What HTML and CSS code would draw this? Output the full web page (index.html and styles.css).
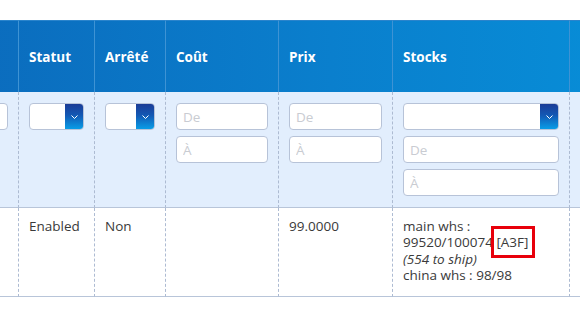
FILE: index.html
```html
<!DOCTYPE html>
<html lang="fr">
<head>
<meta charset="utf-8">
<title>Grille produits</title>
<link rel="stylesheet" href="styles.css">
</head>
<body>
<div class="page">
  <table class="grid">
    <colgroup>
      <col class="w-prev">
      <col class="w-statut">
      <col class="w-arrete">
      <col class="w-cout">
      <col class="w-prix">
      <col class="w-stocks">
      <col class="w-next">
    </colgroup>
    <thead>
      <tr class="head">
        <th class="first"></th>
        <th>Statut</th>
        <th>Arrêté</th>
        <th>Coût</th>
        <th>Prix</th>
        <th>Stocks</th>
        <th></th>
      </tr>
      <tr class="filters">
        <td class="first"><div class="field"><input class="input" type="text"></div></td>
        <td><div class="field"><div class="select"><span class="sel-value"></span><span class="sel-arrow"><svg width="7" height="4" viewBox="0 0 7 4"><path d="M0.5 0.5 L3.5 3.5 L6.5 0.5" fill="none" stroke="#fff" stroke-width="1"/></svg></span></div></div></td>
        <td><div class="field"><div class="select"><span class="sel-value"></span><span class="sel-arrow"><svg width="7" height="4" viewBox="0 0 7 4"><path d="M0.5 0.5 L3.5 3.5 L6.5 0.5" fill="none" stroke="#fff" stroke-width="1"/></svg></span></div></div></td>
        <td><div class="field"><input class="input" type="text" placeholder="De"><input class="input" type="text" placeholder="À"></div></td>
        <td><div class="field"><input class="input" type="text" placeholder="De"><input class="input" type="text" placeholder="À"></div></td>
        <td><div class="field"><div class="select"><span class="sel-value"></span><span class="sel-arrow"><svg width="7" height="4" viewBox="0 0 7 4"><path d="M0.5 0.5 L3.5 3.5 L6.5 0.5" fill="none" stroke="#fff" stroke-width="1"/></svg></span></div><input class="input" type="text" placeholder="De"><input class="input" type="text" placeholder="À"></div></td>
        <td></td>
      </tr>
    </thead>
    <tbody>
      <tr class="row">
        <td class="first"></td>
        <td>Enabled</td>
        <td>Non</td>
        <td></td>
        <td>99.0000</td>
        <td>main whs :<br>99520/100074 <span class="mark">[A3F]</span><br><em>(554 to ship)</em><br>china whs : 98/98</td>
        <td></td>
      </tr>
    </tbody>
  </table>
</div>
</body>
</html>
```
FILE: styles.css
```css
* { box-sizing: border-box; }
html, body { margin: 0; padding: 0; background: #fff; }
body {
  font-family: "Open Sans", "Liberation Sans", sans-serif;
  font-size: 13.5px;
  color: #3a3a3a;
  width: 580px;
  height: 314px;
  overflow: hidden;
}
.page { padding-top: 20px; }
.grid {
  border-collapse: separate;
  border-spacing: 0;
  table-layout: fixed;
  width: 751px;
  margin-left: -82px;
}
.w-prev { width: 100px; }
.w-statut { width: 76px; }
.w-arrete { width: 71px; }
.w-cout { width: 113px; }
.w-prix { width: 114px; }
.w-stocks { width: 177px; }
.w-next { width: 100px; }

.head {
  background: linear-gradient(90deg, #0b69bb 0%, #0a7fcd 55%, #0790d9 100%);
}
.head th {
  height: 72px;
  padding: 0 10px;
  text-align: left;
  vertical-align: middle;
  font-weight: 700;
  font-size: 13.5px;
  color: #fff;
  border-left: 1px solid #3e93d4;
  border-top: 1px solid #2a84cc;
}
.head th.first { border-left: none; }

.filters td {
  background: #e2eefd;
  padding: 11px 10px;
  vertical-align: top;
  border-left: 1px dashed #adbbd2;
  border-bottom: 1px solid #b8c5d9;
}
.filters td.first, .row td.first { border-left: none; }
.field { display: flex; flex-direction: column; gap: 6px; }
.input {
  display: block;
  width: 100%;
  height: 27px;
  margin: 0;
  padding: 0 6px;
  border: 1px solid #b7c3d8;
  border-radius: 4px;
  background: #fff;
  font-family: inherit;
  font-size: 13.5px;
  color: #3a3a3a;
  outline: none;
}
.input::placeholder { color: #c9ccd2; }
.select {
  display: flex;
  height: 27px;
  border: 1px solid #b7c3d8;
  border-radius: 4px;
  background: #fff;
  overflow: hidden;
}
.sel-value { flex: 1; }
.sel-arrow {
  width: 19px;
  margin: -1px -1px -1px 0;
  display: flex;
  align-items: center;
  justify-content: center;
  background: linear-gradient(180deg, #1c3a94 0%, #1358b4 45%, #08a2ea 100%);
}

.row td {
  padding: 10px 10px;
  vertical-align: top;
  line-height: 16.4px;
  background: #fff;
  border-left: 1px dashed #adbbd2;
  border-bottom: 1px solid #b8c5d9;
  height: 89px;
}
.row em { font-style: italic; }
.mark { position: relative; }
.mark::after {
  content: "";
  position: absolute;
  left: -5px;
  right: -7px;
  top: -7px;
  bottom: -7px;
  border: 3px solid #e8000b;
}
```
